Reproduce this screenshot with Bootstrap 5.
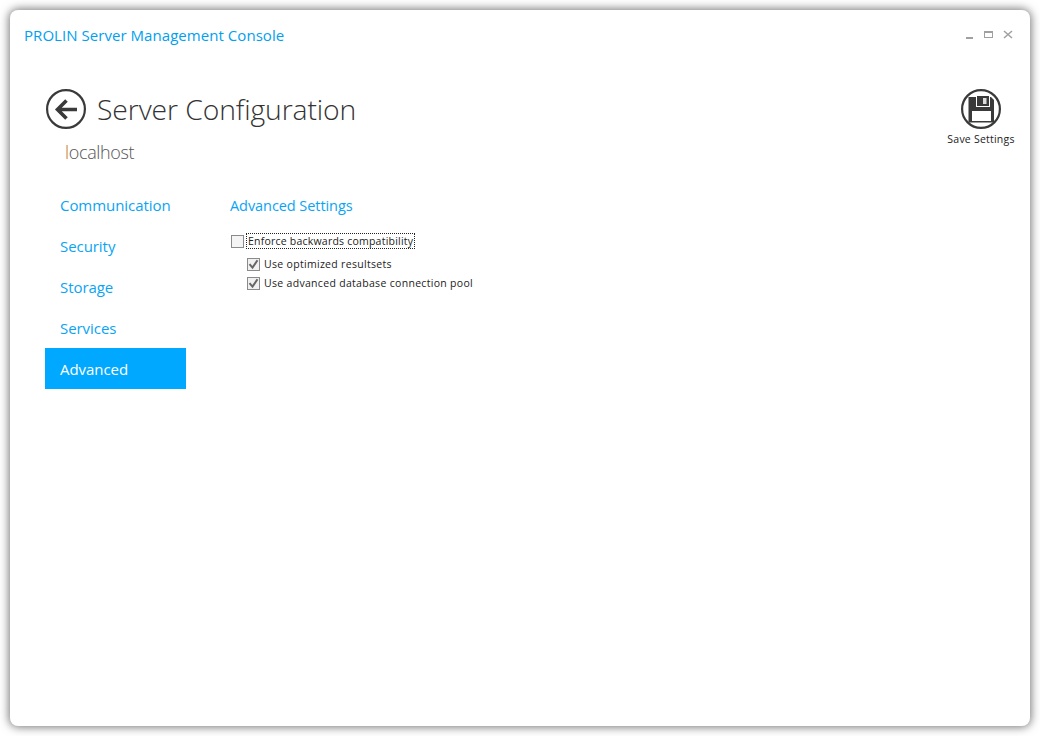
<!DOCTYPE html>
<html lang="en">
<head>
    <meta charset="UTF-8">
    <meta name="viewport" content="width=device-width, initial-scale=1.0">
    <title>PROLIN Server Management Console</title>
    <link href="https://cdn.jsdelivr.net/npm/bootstrap@5.3.3/dist/css/bootstrap.min.css" rel="stylesheet" crossorigin="anonymous">
    <style>
        html, body { height: 100%; }
        body { background: #fff; padding: 10px; font-family: "Open Sans", "Noto Sans", sans-serif; overflow: hidden; }
        .app-window { width: 1020px; height: 716px; background: #fff; border-radius: 8px; box-shadow: 0 0 10px 1px rgba(0,0,0,.55); padding: 15px 14px 0 14px; }
        .app-title { color: #00a0f0; font-size: 15px; line-height: 20px; letter-spacing: .05px; }
        .win-btns { gap: 9px; margin-right: 3px; }
        .app-head { margin-top: 42px; padding: 0 0 0 22px; }
        .page-title { font-size: 28.3px; font-weight: 300; color: #333; line-height: 44px; margin: 0 0 0 11px; letter-spacing: -.1px; }
        .host-name { font-size: 18px; font-weight: 300; color: #555; line-height: 24px; margin: 9px 0 0 19px; letter-spacing: -.35px; }
        .host-name b { font-weight: 300; color: #c8742a; }
        .save-btn { width: 70px; font-size: 10.5px; line-height: 14px; color: #222; text-align: center; margin-top: 2px; letter-spacing: .22px; white-space: nowrap; }
        .save-btn svg { display: block; margin: 0 auto 3px; }
        .app-body { margin-top: 20px; padding-left: 21px; }
        .side-nav { width: 141px; }
        .side-nav .nav-link { height: 41px; padding: 0 15px; line-height: 43px; font-size: 15px; color: #0aa4f4; border-radius: 0; letter-spacing: -.06px; }
        .side-nav .nav-link.active { background: #00a8ff; color: #fff; }
        .settings-pane { margin-left: 45px; padding-top: 10px; }
        .settings-title { font-size: 14.5px; line-height: 24px; color: #0aa4f4; font-weight: 400; margin: 0 0 16px; letter-spacing: -.07px; margin-left: -1px; }
        .opt { display: flex; align-items: center; font-size: 10.5px; color: #222; line-height: 14px; margin: 0; padding: 0; min-height: 0; letter-spacing: .31px; }
        .opt .form-check-input { width: 13px; height: 13px; margin: 0; border: 1px solid #8a8a8a; border-radius: 0; background-color: #f4f4f4; float: none; }
        .opt .form-check-input:checked { background-color: #f0f0f0; border-color: #8a8a8a; background-image: url("data:image/svg+xml,%3Csvg xmlns='http://www.w3.org/2000/svg' viewBox='0 0 13 13'%3E%3Cpath d='M2.5 6.2l3 3.4 5-7.4' fill='none' stroke='%23666' stroke-width='2'/%3E%3C/svg%3E"); background-size: 13px 13px; }
        .opt .form-check-label { margin-left: 4px; }
        .opt .opt-focus { outline: 1px dotted #222; padding: 0 1px; margin-left: 3px; letter-spacing: .22px; }
        .sub-opts { margin: 9px 0 0 16px; display: flex; flex-direction: column; gap: 5px; }
    </style>
</head>
<body>
    <div class="app-window">
        <div class="d-flex justify-content-between align-items-center">
            <div class="app-title">PROLIN Server Management Console</div>
            <div class="d-flex align-items-center win-btns">
                <svg width="10" height="10" viewBox="0 0 10 10"><rect x="1" y="7" width="7" height="2" fill="#a0a0a0"/></svg>
                <svg width="10" height="10" viewBox="0 0 10 10"><rect x=".5" y="1.5" width="8" height="6" fill="none" stroke="#a0a0a0"/><rect x="0" y="1" width="9" height="2" fill="#a0a0a0"/></svg>
                <svg width="10" height="10" viewBox="0 0 10 10"><path d="M1 1l8 7M9 1L1 8" stroke="#a0a0a0" stroke-width="1.5"/></svg>
            </div>
        </div>

        <div class="d-flex justify-content-between align-items-start app-head">
            <div>
                <div class="d-flex align-items-center">
                    <svg width="40" height="40" viewBox="0 0 40 40">
                        <circle cx="20" cy="20" r="18.9" fill="none" stroke="#3a3a3a" stroke-width="2.2"/>
                        <path d="M31 20.5H11.5M20.5 11.5l-9 9 9 9" fill="none" stroke="#3a3a3a" stroke-width="3.6"/>
                    </svg>
                    <h1 class="page-title">Server Configuration</h1>
                </div>
                <div class="host-name"><b>l</b>ocalhost</div>
            </div>
            <div class="save-btn">
                <svg width="40" height="40" viewBox="0 0 40 40">
                    <circle cx="20" cy="20" r="18.9" fill="none" stroke="#3a3a3a" stroke-width="2.2"/>
                    <path d="M7.5 8H30l3 3v22.5H7.5z" fill="#3a3a3a"/>
                    <rect x="11" y="22" width="19" height="10" fill="#fff"/>
                    <rect x="15" y="7" width="14" height="11" fill="#fff"/>
                    <rect x="16" y="7" width="12" height="10" fill="#3a3a3a"/>
                    <rect x="22" y="9" width="3.5" height="6" fill="#ddd"/>
                </svg>
                Save Settings
            </div>
        </div>

        <div class="d-flex app-body">
            <nav class="nav flex-column side-nav">
                <a class="nav-link" href="#">Communication</a>
                <a class="nav-link" href="#">Security</a>
                <a class="nav-link" href="#">Storage</a>
                <a class="nav-link" href="#">Services</a>
                <a class="nav-link active" href="#">Advanced</a>
            </nav>
            <div class="settings-pane">
                <h2 class="settings-title">Advanced Settings</h2>
                <div class="form-check opt">
                    <input class="form-check-input" type="checkbox" id="optCompat">
                    <label class="form-check-label opt-focus" for="optCompat">Enforce backwards compatibility</label>
                </div>
                <div class="sub-opts">
                    <div class="form-check opt">
                        <input class="form-check-input" type="checkbox" id="optResult" checked>
                        <label class="form-check-label" for="optResult">Use optimized resultsets</label>
                    </div>
                    <div class="form-check opt">
                        <input class="form-check-input" type="checkbox" id="optPool" checked>
                        <label class="form-check-label" for="optPool">Use advanced database connection pool</label>
                    </div>
                </div>
            </div>
        </div>
    </div>
    <script src="https://cdn.jsdelivr.net/npm/bootstrap@5.3.3/dist/js/bootstrap.bundle.min.js" crossorigin="anonymous"></script>
</body>
</html>
